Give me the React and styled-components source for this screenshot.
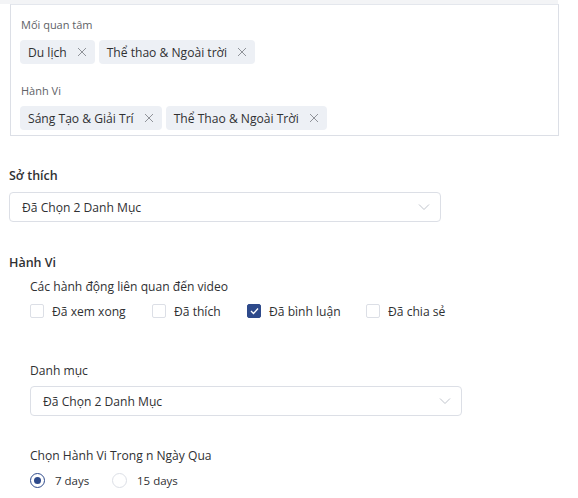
import React from "react";
import styled, { createGlobalStyle } from "styled-components";

const Global = createGlobalStyle`
  html, body { margin: 0; padding: 0; background: #fff; }
  body { font-family: "Open Sans", "Noto Sans", sans-serif; color: #303133; }
  * { box-sizing: border-box; }
`;

const Page = styled.div`
  width: 578px;
  height: 498px;
  overflow: hidden;
  position: relative;
`;

const TopStrip = styled.div`
  height: 4px;
  width: 558px;
  background: #f3f4f6;
`;

const SummaryBox = styled.div`
  margin-left: 10px;
  width: 549px;
  height: 132px;
  border: 1px solid #dcdfe6;
  border-top-color: #e4e7ed;
  padding: 12px 9px 0 9px;
  display: flex;
  flex-direction: column;
`;

const SmallLabel = styled.div`
  font-size: 11px;
  line-height: 16px;
  color: #606266;
  padding-left: 1px;
  margin-top: ${(p) => p.$mt || 0}px;
`;

const TagRow = styled.div`
  display: flex;
  gap: 4px;
  margin-top: 7px;
`;

const Tag = styled.div`
  display: inline-flex;
  align-items: center;
  height: 24px;
  padding: 0 8px;
  background: #edf0f5;
  border-radius: 4px;
  font-size: 12.1px;
  color: #303133;
  white-space: nowrap;
`;

const CloseIcon = styled.svg`
  width: 10px;
  height: 10px;
  margin-left: 10px;
  flex: none;
`;

const Content = styled.div`
  padding-left: 9px;
`;

const SectionTitle = styled.div`
  font-size: 12.5px;
  font-weight: 600;
  line-height: 18px;
  color: #303133;
  margin-top: ${(p) => p.$mt || 0}px;
`;

const Indent = styled.div`
  padding-left: 21px;
`;

const FieldLabel = styled.div`
  font-size: 12.1px;
  line-height: 18px;
  color: #303133;
  margin-top: ${(p) => p.$mt || 0}px;
`;

const Select = styled.div`
  width: 432px;
  height: 30px;
  border: 1px solid #dcdfe6;
  border-radius: 4px;
  display: flex;
  align-items: center;
  justify-content: space-between;
  padding: 0 8px 0 12px;
  font-size: 12.1px;
  color: #303133;
  margin-top: ${(p) => p.$mt || 0}px;
`;

const Chevron = styled.svg`
  width: 12px;
  height: 8px;
  flex: none;
  margin-right: 2px;
`;

const CheckRow = styled.div`
  display: flex;
  align-items: center;
  margin-top: 5px;
  height: 20px;
`;

const CheckItem = styled.label`
  display: inline-flex;
  align-items: center;
  font-size: 12.1px;
  color: #303133;
  width: ${(p) => p.$w}px;
`;

const Box = styled.span`
  width: 14px;
  height: 14px;
  border: 1px solid ${(p) => (p.$checked ? "#2e4a8b" : "#dcdfe6")};
  background: ${(p) => (p.$checked ? "#2e4a8b" : "#fff")};
  border-radius: 2px;
  margin-right: 8px;
  display: inline-flex;
  align-items: center;
  justify-content: center;
  flex: none;
`;

const RadioRow = styled.div`
  display: flex;
  align-items: center;
  margin-top: 5px;
  height: 20px;
`;

const RadioItem = styled.label`
  display: inline-flex;
  align-items: center;
  font-size: 11.5px;
  color: #303133;
  width: ${(p) => p.$w}px;
`;

const RadioCircle = styled.span`
  width: 15px;
  height: 15px;
  border-radius: 50%;
  border: 1px solid ${(p) => (p.$checked ? "#2e4a8b" : "#dcdfe6")};
  margin-right: 10px;
  display: inline-flex;
  align-items: center;
  justify-content: center;
  flex: none;
  &::after {
    content: "";
    width: 7px;
    height: 7px;
    border-radius: 50%;
    background: ${(p) => (p.$checked ? "#2e4a8b" : "transparent")};
  }
`;

const X = () => (
  <CloseIcon viewBox="0 0 10 10">
    <path d="M1 1 L9 9 M9 1 L1 9" stroke="#909399" strokeWidth="1" fill="none" />
  </CloseIcon>
);

const Down = () => (
  <Chevron viewBox="0 0 12 8">
    <path d="M1 1.5 L6 6.5 L11 1.5" stroke="#c0c4cc" strokeWidth="1" fill="none" />
  </Chevron>
);

const Check = () => (
  <svg width="9" height="8" viewBox="0 0 9 8">
    <path d="M1 4 L3.5 6.5 L8 1.5" stroke="#fff" strokeWidth="1.3" fill="none" />
  </svg>
);

export default function App() {
  return (
    <Page>
      <Global />
      <TopStrip />
      <SummaryBox>
        <SmallLabel>Mối quan tâm</SmallLabel>
        <TagRow>
          <Tag>Du lịch<X /></Tag>
          <Tag>Thể thao &amp; Ngoài trời<X /></Tag>
        </TagRow>
        <SmallLabel $mt={19}>Hành Vi</SmallLabel>
        <TagRow>
          <Tag>Sáng Tạo &amp; Giải Trí<X /></Tag>
          <Tag>Thể Thao &amp; Ngoài Trời<X /></Tag>
        </TagRow>
      </SummaryBox>
      <Content>
        <SectionTitle $mt={31}>Sở thích</SectionTitle>
        <Select $mt={7}>
          <span>Đã Chọn 2 Danh Mục</span>
          <Down />
        </Select>
        <SectionTitle $mt={32}>Hành Vi</SectionTitle>
        <Indent>
          <FieldLabel $mt={6}>Các hành động liên quan đến video</FieldLabel>
          <CheckRow>
            <CheckItem $w={122}><Box />Đã xem xong</CheckItem>
            <CheckItem $w={95}><Box />Đã thích</CheckItem>
            <CheckItem $w={119}><Box $checked><Check /></Box>Đã bình luận</CheckItem>
            <CheckItem $w={100}><Box />Đã chia sẻ</CheckItem>
          </CheckRow>
          <FieldLabel $mt={41}>Danh mục</FieldLabel>
          <Select $mt={6}>
            <span>Đã Chọn 2 Danh Mục</span>
            <Down />
          </Select>
          <FieldLabel $mt={31}>Chọn Hành Vi Trong n Ngày Qua</FieldLabel>
          <RadioRow $mt={4}>
            <RadioItem $w={82}><RadioCircle $checked />7 days</RadioItem>
            <RadioItem $w={80}><RadioCircle />15 days</RadioItem>
          </RadioRow>
        </Indent>
      </Content>
    </Page>
  );
}
